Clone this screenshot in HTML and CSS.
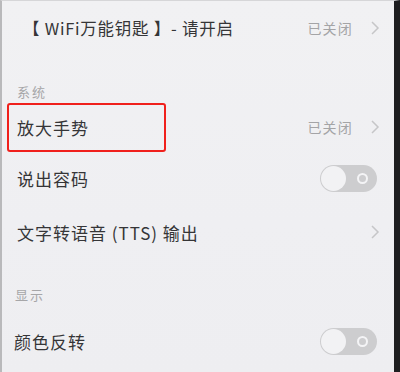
FILE: index.html
```html
<!DOCTYPE html>
<html lang="zh-CN">
<head>
<meta charset="utf-8">
<link rel="stylesheet" href="styles.css">
</head>
<body>
<div class="screen">
  <div class="row row-top">
    <span class="label">【 WiFi万能钥匙 】- 请开启</span>
    <span class="right"><span class="value">已关闭</span><svg class="chev" width="10" height="16" viewBox="0 0 10 16"><polyline points="2,2 8,8 2,14" fill="none" stroke="#c6c6c8" stroke-width="1.5"/></svg></span>
  </div>
  <div class="section">系统</div>
  <div class="row row-hl">
    <span class="highlight"><span class="label">放大手势</span></span>
    <span class="right"><span class="value">已关闭</span><svg class="chev" width="10" height="16" viewBox="0 0 10 16"><polyline points="2,2 8,8 2,14" fill="none" stroke="#c6c6c8" stroke-width="1.5"/></svg></span>
  </div>
  <div class="row row-b">
    <span class="label">说出容码</span>
    <span class="toggle"><span class="knob"></span><span class="ring"></span></span>
  </div>
  <div class="row row-c">
    <span class="label">文字转语音 (TTS) 输出</span>
    <span class="right"><svg class="chev" width="10" height="16" viewBox="0 0 10 16"><polyline points="2,2 8,8 2,14" fill="none" stroke="#c6c6c8" stroke-width="1.5"/></svg></span>
  </div>
  <div class="section section-2">显示</div>
  <div class="row row-d">
    <span class="label">颜色反转</span>
    <span class="toggle"><span class="knob"></span><span class="ring"></span></span>
  </div>
</div>
</body>
</html>
```
FILE: styles.css
```css
html, body {
  margin: 0;
  padding: 0;
  background: #efeff1;
}
.screen {
  width: 400px;
  height: 372px;
  box-sizing: border-box;
  border-left: 2px solid #b9b9bb;
  border-right: 6px solid #1e1e20;
  border-top: 1px solid #d6d6d8;
  background: linear-gradient(180deg, #f1f1f3 0%, #efeff2 60%, #eeeef1 100%);
  display: flex;
  flex-direction: column;
  font-family: "Noto Sans CJK SC", "Noto Sans", sans-serif;
  overflow: hidden;
}
.row {
  display: flex;
  align-items: center;
  justify-content: space-between;
  padding-left: 15px;
  padding-right: 14px;
}
.label {
  font-size: 17px;
  letter-spacing: 1px;
  color: #353537;
  white-space: nowrap;
}
.row-top {
  height: 54px;
  padding-left: 21px;
}
.row-top .label {
  font-size: 16.5px;
  letter-spacing: 0.75px;
}
.right {
  display: flex;
  align-items: center;
  gap: 17px;
}
.value {
  font-size: 14px;
  letter-spacing: 1.2px;
  color: #a4a4a6;
}
.chev {
  display: block;
}
.section {
  margin-top: 27px;
  padding-left: 15px;
  height: 20px;
  line-height: 20px;
  font-size: 13px;
  letter-spacing: 2px;
  color: #a6a6a8;
}
.row-hl {
  padding-left: 5px;
  height: 50px;
}
.highlight {
  box-sizing: border-box;
  width: 159px;
  height: 49px;
  border: 2px solid #f0201c;
  border-radius: 3px;
  display: flex;
  align-items: center;
  padding-left: 8px;
}
.row-b {
  height: 53px;
}
.row-c {
  height: 54px;
}
.section-2 {
  margin-top: 26px;
  padding-left: 13px;
}
.row-d {
  margin-top: 11px;
  padding-left: 12px;
  height: 50px;
}
.toggle {
  position: relative;
  width: 57px;
  height: 27px;
  border-radius: 14px;
  background: #cdcdcf;
  margin-right: 3px;
}
.knob {
  position: absolute;
  left: 1px;
  top: 1px;
  width: 25px;
  height: 25px;
  border-radius: 50%;
  background: #f2f2f4;
}
.ring {
  position: absolute;
  right: 9px;
  top: 8px;
  width: 7px;
  height: 7px;
  border: 2px solid #f4f4f6;
  border-radius: 50%;
}
```
